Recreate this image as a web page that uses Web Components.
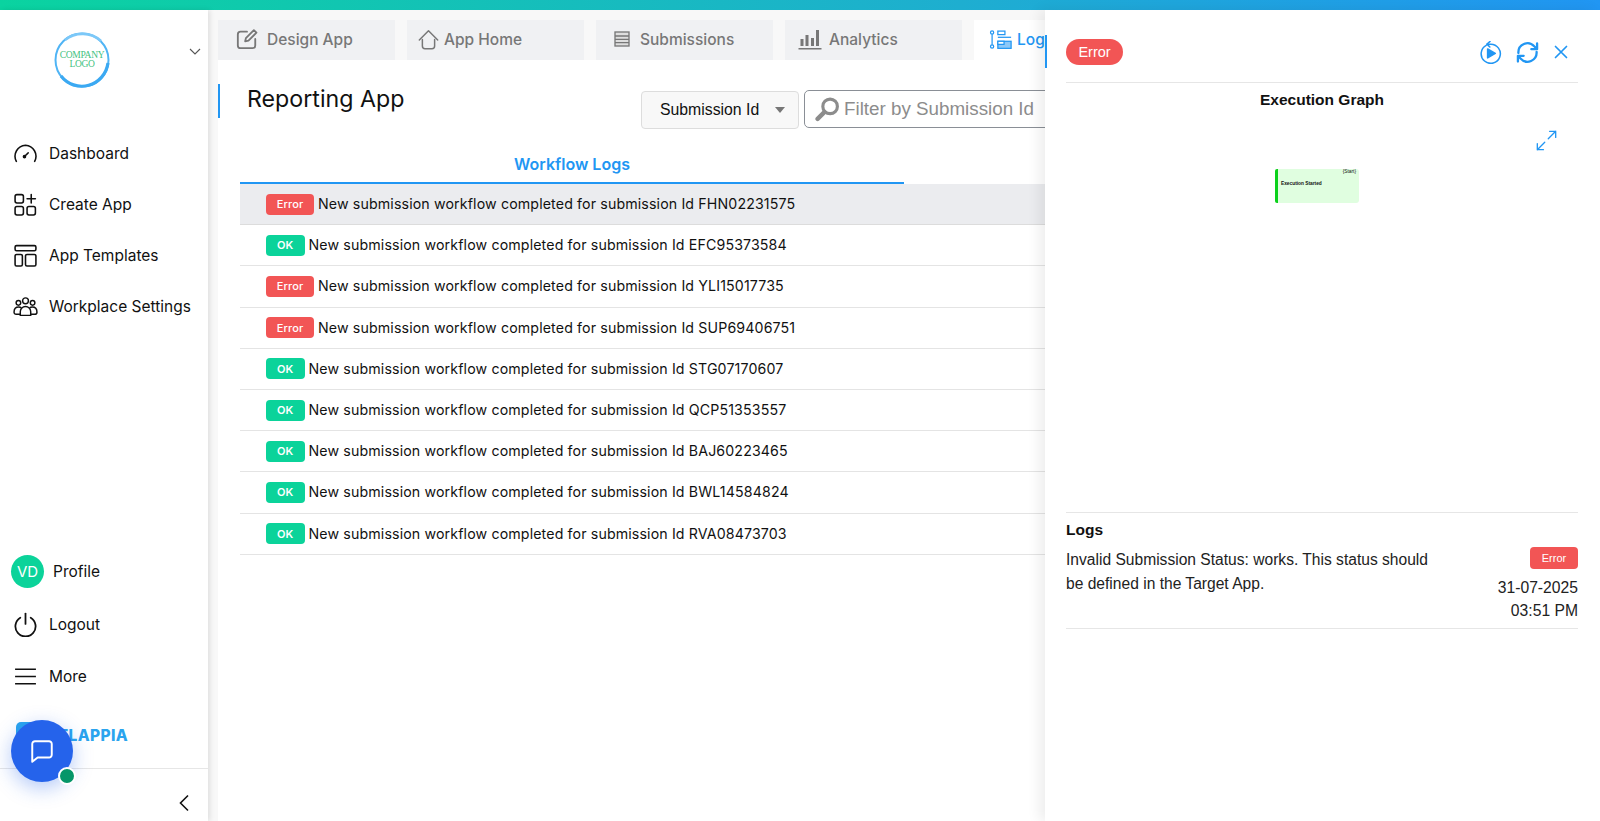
<!DOCTYPE html>
<html><head><meta charset="utf-8"><title>Reporting App</title>
<style>
html,body{margin:0;padding:0;height:100%;overflow:hidden;background:#fff;font-family:Inter,"Liberation Sans",sans-serif;color:#111}
</style></head><body>
<x-app></x-app>
<script>
const def=(n,css,html)=>{customElements.define(n,class extends HTMLElement{
  connectedCallback(){ if(this.shadowRoot)return; const r=this.attachShadow({mode:'open'});
    r.innerHTML=`<style>${css}</style>`+(typeof html==='function'?html(this):html);}
});};
const I={
 dash:`<svg viewBox="0 0 24 24" fill="none" stroke="#111" stroke-width="1.5" stroke-linecap="round"><path d="M3.2 19.5A10.6 10.6 0 0 1 12 4a10.6 10.6 0 0 1 8.8 15.5"/><path d="M11 14.8l3.6-3.4" stroke-width="1.4"/><circle cx="11" cy="15" r="1" fill="#111"/></svg>`,
 create:`<svg viewBox="0 0 24 24" fill="none" stroke="#111" stroke-width="1.5" stroke-linecap="round"><rect x="2" y="2.5" width="8" height="8" rx="1.8"/><rect x="2" y="14" width="8" height="8" rx="1.8"/><rect x="13.5" y="14" width="8" height="8" rx="1.8"/><path d="M17.5 2.5v8M13.5 6.5h8"/></svg>`,
 tmpl:`<svg viewBox="0 0 24 24" fill="none" stroke="#111" stroke-width="1.5"><rect x="2" y="2.5" width="20" height="5" rx="1.4"/><rect x="2" y="11" width="7" height="11" rx="1.4"/><rect x="12" y="11" width="10" height="11" rx="1.4"/></svg>`,
 team:`<svg viewBox="0 0 24 24" fill="none" stroke="#111" stroke-width="1.4"><circle cx="12" cy="6.500" r="2.800"/><circle cx="5.200" cy="8.500" r="2.200"/><circle cx="18.800" cy="8.500" r="2.200"/><path d="M7 20.500v-3.500a5 5 0 0 1 10 0v3.500z"/><path d="M7 19.500H3a2 2 0 0 1-2-2c0-3 1.800-5 4.500-5 1 0 1.800.2 2.500.8M17 19.500h4a2 2 0 0 0 2-2c0-3-1.800-5-4.500-5-1 0-1.800.2-2.500.8"/></svg>`,
 power:`<svg viewBox="0 0 24 24" fill="none" stroke="#111" stroke-width="1.700" stroke-linecap="round"><path d="M7 5.500a9.700 9.700 0 1 0 10 0"/><path d="M12 1.500v10"/></svg>`,
 menu:`<svg viewBox="0 0 24 24" fill="none" stroke="#111" stroke-width="1.500"><path d="M2 5h20M2 12h20M2 19h20"/></svg>`,
 edit:`<svg viewBox="0 0 24 24" fill="none" stroke="#777" stroke-width="2" stroke-linecap="round" stroke-linejoin="round"><path d="M12 4H5a3 3 0 0 0-3 3v12a3 3 0 0 0 3 3h13a3 3 0 0 0 3-3v-7"/><path d="M10 14.500l.8-3.500L19.500 2.300l2.800 2.800-8.700 8.700z"/></svg>`,
 home:`<svg viewBox="0 0 24 24" fill="none" stroke="#777" stroke-width="1.700" stroke-linejoin="round" stroke-linecap="round"><path d="M1.500 12.500L12 2l10.500 10.500"/><path d="M5 12v7.500a3 3 0 0 0 3 3h8a3 3 0 0 0 3-3V12"/></svg>`,
 subs:`<svg viewBox="0 0 24 24" fill="none" stroke="#777" stroke-width="2"><rect x="1.500" y="1.500" width="21" height="21" fill="#dedede"/><path d="M1.500 7.500h21M1.500 12.500h21M1.500 17.500h21"/></svg>`,
 chart:`<svg viewBox="0 0 24 24" fill="#777"><rect x="2.500" y="12" width="3" height="7"/><rect x="7.500" y="8" width="3" height="11"/><rect x="13" y="11" width="3" height="8"/><rect x="18" y="3" width="3" height="16"/><rect x="0.500" y="21" width="23" height="1.500"/></svg>`,
 logs:`<svg viewBox="0 0 26 24" fill="none" stroke="#2196f3" stroke-width="1.400"><circle cx="3.500" cy="4" r="1.800"/><circle cx="3.500" cy="20" r="1.800"/><path d="M3.500 6v12"/><rect x="10" y="2.500" width="8" height="4"/><path d="M10 9.500h15"/><rect x="10" y="14" width="15" height="8" fill="#8cc8f8"/><rect x="10" y="14" width="7" height="3.500" fill="#fff"/></svg>`,
 search:`<svg viewBox="0 0 24 24" fill="none" stroke="#8c8c8c"><circle cx="14.500" cy="9" r="7" stroke-width="3"/><path d="M9 14.500L2.500 21" stroke-width="4.200" stroke-linecap="round"/></svg>`,
 replay:`<svg viewBox="0 0 24 24" fill="none" stroke="#2196f3" stroke-width="1.600" stroke-linecap="round" stroke-linejoin="round"><path d="M7.500 4.500A10 10 0 1 0 12 3.300H8.500"/><path d="M11.500 .5L8.300 3.300l3 3"/><path d="M9 8.300l8 4.700-8 4.700z" fill="#2196f3"/></svg>`,
 sync:`<svg viewBox="0 0 24 24" fill="none" stroke="#2196f3" stroke-width="2.400" stroke-linecap="round" stroke-linejoin="round"><path d="M2.500 12.500A9.500 9.500 0 0 1 19 5.500l2.500 2.500"/><path d="M22 2.500V8.500h-6"/><path d="M21.500 11.500A9.500 9.500 0 0 1 5 18.500L2.500 16"/><path d="M2 21.500V15.500h6"/></svg>`,
 close:`<svg viewBox="0 0 14 14" fill="none" stroke="#2196f3" stroke-width="1.700" stroke-linecap="round"><path d="M1.500 1.500l11 11M12.500 1.500l-11 11"/></svg>`,
 expand:`<svg viewBox="0 0 24 24" fill="none" stroke="#2196f3" stroke-width="1.500" stroke-linecap="round"><path d="M14 10L22.500 1.500M15.500 1.500h7v7M10 14L1.500 22.500M8.500 22.500h-7v-7"/></svg>`,
 chat:`<svg viewBox="0 0 24 24" fill="none" stroke="#fff" stroke-width="1.800" stroke-linejoin="round"><path d="M3 5.500A2.500 2.500 0 0 1 5.500 3h13A2.500 2.500 0 0 1 21 5.500v10a2.500 2.500 0 0 1-2.500 2.500H8l-5 4z"/></svg>`,
};
def('icon-box',`:host{display:inline-flex;flex:none;width:var(--s,24px);height:var(--s,24px)}svg{width:100%;height:100%;display:block}`,h=>I[h.getAttribute('n')]);

def('company-logo',`:host{display:flex;position:relative;width:58px;height:58px;align-items:center;justify-content:center}
 svg{position:absolute;inset:0}
 span{position:relative;font:9.500px/9px "Liberation Serif",serif;color:#3fc27f;text-align:center;letter-spacing:-.3px}`,
 `<svg viewBox="0 0 58 58" fill="none"><circle cx="29" cy="29" r="26.500" stroke="#4fb4f5" stroke-width="2"/><path d="M8 45A26.500 27 0 0 0 55 32" stroke="#3ba9f2" stroke-width="3.200"/><path d="M12 9A27 26 0 0 1 48 10" stroke="#7cc8f8" stroke-width="2.600"/></svg><span>COMPANY<br>LOGO</span>`);

def('nav-item',`:host{display:flex;align-items:center;gap:11px;height:var(--h,51px);padding-left:13px;font-size:15.500px;color:#111;white-space:nowrap}`,
 h=>`<icon-box n="${h.getAttribute('icon')}" style="--s:25px"></icon-box><slot></slot>`);

def('side-nav',`:host{display:flex;flex-direction:column;width:208px;flex:none;background:#fff;box-shadow:2px 0 5px rgba(0,0,0,.1);position:relative;z-index:2;box-sizing:border-box}
 .head{display:flex;height:98px;align-items:flex-start;position:relative;box-sizing:border-box;padding:21px 0 0 53px}
 .chev{margin:17px 0 0 78px;width:12px;height:7px}
 nav{margin-top:20px}
 .sp{flex:1}
 .profile{display:flex;align-items:center;gap:9px;height:52px;padding-left:11px;font-size:15.500px;box-sizing:border-box}
 .av{width:33px;height:33px;border-radius:50%;background:#0bd39a;color:#fff;font-size:15px;display:flex;align-items:center;justify-content:center}
 .brand{display:flex;align-items:center;height:40px;padding-left:16px;gap:16px;font:800 15.500px Inter,sans-serif;color:#2aa4ee;letter-spacing:.4px;margin-top:13px}
 .brand i{width:27px;height:27px;border-radius:5px;background:#2aa4ee;display:block}
 .foot{height:43px;border-top:1px solid #e6e6e6;display:flex;justify-content:flex-end;align-items:flex-end;padding:0 18px 9px 0;margin-top:13px}`,
 `<div class="head"><company-logo></company-logo><svg class="chev" viewBox="0 0 12 7" fill="none" stroke="#555" stroke-width="1.100"><path d="M1 1l5 5 5-5"/></svg></div>
 <nav><nav-item icon="dash">Dashboard</nav-item><nav-item icon="create">Create App</nav-item><nav-item icon="tmpl">App Templates</nav-item><nav-item icon="team">Workplace Settings</nav-item></nav>
 <div class="sp"></div>
 <div class="profile"><span class="av">VD</span>Profile</div>
 <nav-item icon="power" style="--h:54px">Logout</nav-item><nav-item icon="menu" style="--h:51px">More</nav-item>
 <div class="brand"><i></i><span>FLAPPIA</span></div>
 <div class="foot"><svg width="12" height="18" viewBox="0 0 12 18" fill="none" stroke="#111" stroke-width="1.600"><path d="M10 1.500L2.500 9l7.500 7.500"/></svg></div>`);

def('tab-item',`:host{display:flex;flex:none;align-items:center;box-sizing:border-box;width:177px;height:40px;background:#f0f1f3;color:#777;font-size:15.500px;font-weight:500;padding:0 0 2px var(--pl,18px);gap:var(--g,9px);white-space:nowrap}
 :host([active]){background:#fff;color:#2196f3}`,
 h=>`<icon-box n="${h.getAttribute('icon')}" style="--s:${h.getAttribute('s')||22}px"></icon-box><slot></slot>`);

def('status-badge',`:host{display:inline-flex;align-items:center;justify-content:center;flex:none;height:21px;border-radius:4px;color:#fff;font-size:11px;font-weight:500;box-sizing:border-box;width:48px;background:#f25555}
 :host([k=ok]){width:38.500px;background:#0bd39a;font-weight:600}`,`<slot></slot>`);

def('log-row',`:host{display:flex;align-items:center;gap:4px;height:41.200px;box-sizing:border-box;padding:0 0 0 26px;border-bottom:1px solid #e4e4e4;font-size:14.200px;letter-spacing:.13px;color:#111;white-space:nowrap}
 :host([sel]){background:#ebecef;border-bottom-color:#dcdcdc}
 span{margin-top:-1px}`,
 h=>`<status-badge k="${h.getAttribute('k')}">${h.getAttribute('k')==='ok'?'OK':'Error'}</status-badge><span><slot></slot></span>`);

def('main-view',`:host{flex:1;min-width:0;display:flex;flex-direction:column;background:#f8f8f8;padding:10px 0 0 10px}
 .tabs{display:flex;gap:12px;height:40px;flex:none}
 .body{flex:1;background:#fff;position:relative;padding:0 0 0 22px}
 .mark{position:absolute;left:0;top:24px;width:2px;height:34px;background:#2196f3}
 .top{display:flex;height:88px;box-sizing:border-box;padding:25px 0 0 7px}
 h1{font:400 23.200px Inter,sans-serif;margin:0;color:#111;width:394px;flex:none}
 .sel{width:158px;height:38px;box-sizing:border-box;margin-top:6px;border:1px solid #ddd;border-radius:4px;background:#f8f8f8;display:flex;align-items:center;justify-content:space-between;padding:0 13px 0 18px;font:15.800px "Liberation Sans",sans-serif;color:#111}
 .sel i{border:5px solid transparent;border-top:6px solid #777;border-bottom:0}
 .inp{margin:5px 0 0 5px;height:38px;width:400px;box-sizing:border-box;border:1px solid #8a8f96;border-radius:5px;display:flex;align-items:center;gap:4px;padding-left:10px;font:18.800px "Liberation Sans",sans-serif;color:#8c8c8c;white-space:nowrap}
 .wt{width:664px;box-sizing:border-box;border-bottom:2px solid #2196f3;height:36px;text-align:center;font-size:16px;font-weight:600;color:#2196f3;line-height:32px}`,
 `<div class="tabs"><tab-item icon="edit">Design App</tab-item><tab-item icon="home" s="21" style="--pl:11px;--g:5px">App Home</tab-item><tab-item icon="subs" s="16" style="--pl:18px;--g:10px">Submissions</tab-item><tab-item icon="chart" s="24" style="--pl:13px;--g:7px">Analytics</tab-item><tab-item icon="logs" s="23" active style="--pl:15px;--g:5px">Logs</tab-item></div>
 <div class="body"><div class="mark"></div>
 <div class="top"><h1>Reporting App</h1><div class="sel">Submission Id<i></i></div><div class="inp"><icon-box n="search" style="--s:25px"></icon-box>Filter by Submission Id</div></div>
 <div class="wt">Workflow Logs</div>
 <div>
 <log-row k="err" sel>New submission workflow completed for submission Id FHN02231575</log-row>
 <log-row k="ok">New submission workflow completed for submission Id EFC95373584</log-row>
 <log-row k="err">New submission workflow completed for submission Id YLI15017735</log-row>
 <log-row k="err">New submission workflow completed for submission Id SUP69406751</log-row>
 <log-row k="ok">New submission workflow completed for submission Id STG07170607</log-row>
 <log-row k="ok">New submission workflow completed for submission Id QCP51353557</log-row>
 <log-row k="ok">New submission workflow completed for submission Id BAJ60223465</log-row>
 <log-row k="ok">New submission workflow completed for submission Id BWL14584824</log-row>
 <log-row k="ok">New submission workflow completed for submission Id RVA08473703</log-row>
 </div></div>`);

def('log-drawer',`:host{position:absolute;top:10px;right:0;bottom:0;width:555px;background:#fff;box-shadow:-6px 0 12px rgba(0,0,0,.07);box-sizing:border-box;padding:0 22px 0 21px;z-index:3;font-family:"Liberation Sans",Arial,sans-serif;color:#111;display:flex;flex-direction:column}
 .grip{position:absolute;left:0;top:25px;width:2px;height:33px;background:#2196f3}
 .head{display:flex;align-items:center;height:73px;border-bottom:1px solid #e6e6e6;box-sizing:border-box;padding-top:12px;flex:none}
 .pill{width:57px;height:26px;border-radius:13px;background:#f25555;color:#fff;font-size:14.500px;display:flex;align-items:center;justify-content:center}
 .acts{margin-left:auto;display:flex;align-items:center;gap:14px;padding-right:10px}
 h2{font-size:15.500px;font-weight:700;text-align:center;margin:8px 0 0;line-height:18px;height:18px}
 .graph{height:430px;display:flex;flex-direction:column;flex:none;border-bottom:1px solid #e6e6e6;box-sizing:border-box}
 .exp{align-self:flex-end;margin:21px 21px 0 0}
 .node{position:absolute;left:230px;top:159px;width:84px;height:34px;border-left:3px solid #0bd11b;background:#e0fee0;border-radius:2px 3px 3px 2px;box-sizing:border-box;font-size:4.800px;font-weight:700;white-space:nowrap}
 .node b{position:absolute;left:3px;top:12px}.node u{position:absolute;right:3px;top:0;text-decoration:none;font-weight:400}
 h3{font-size:15.500px;font-weight:700;margin:8px 0 0;line-height:18px}
 .ent{display:flex;justify-content:space-between;border-bottom:1px solid #e6e6e6;height:82px;box-sizing:border-box;margin-top:8px}
 .ent p{margin:1px 0 0;width:375px;font-size:15.600px;line-height:24px;color:#222}
 .r{text-align:right;font-size:15.700px;line-height:23px;display:flex;flex-direction:column;align-items:flex-end;color:#222}
 .r status-badge{margin-bottom:7px;height:22px;width:48px;font:11px "Liberation Sans",sans-serif}`,
 `<div class="grip"></div>
 <div class="head"><span class="pill">Error</span><div class="acts"><icon-box n="replay" style="--s:23px"></icon-box><icon-box n="sync" style="--s:23px"></icon-box><icon-box n="close" style="--s:14px;margin-left:1px"></icon-box></div></div>
 <div class="graph"><h2>Execution Graph</h2><icon-box class="exp" n="expand" style="--s:21px"></icon-box><div class="node"><b>Execution Started</b><u>{Start}</u></div></div>
 <div><h3>Logs</h3><div class="ent"><p>Invalid Submission Status: works. This status should be defined in the Target App.</p><div class="r"><status-badge k="err">Error</status-badge><span>31-07-2025</span><span>03:51 PM</span></div></div></div>`);

def('chat-fab',`:host{position:absolute;left:11px;top:720px;width:62px;height:62px;border-radius:50%;background:#2563eb;box-shadow:0 6px 20px rgba(37,99,235,.35);display:flex;align-items:center;justify-content:center;z-index:4}
 i{position:absolute;left:47px;top:47px;width:14px;height:14px;border-radius:50%;background:#059669;border:2px solid #fff}`,
 `<icon-box n="chat" style="--s:26px"></icon-box><i></i>`);

def('x-app',`:host{display:flex;flex-direction:column;position:relative;width:1600px;height:821px;overflow:hidden}
 .bar{height:10px;flex:none;background:linear-gradient(90deg,#0ad3a0 0%,#1eaed0 60%,#2196f3 100%)}
 .row{flex:1;display:flex;min-height:0}`,
 `<div class="bar"></div><div class="row"><side-nav></side-nav><main-view></main-view></div><log-drawer></log-drawer><chat-fab></chat-fab>`);
</script></body></html>
